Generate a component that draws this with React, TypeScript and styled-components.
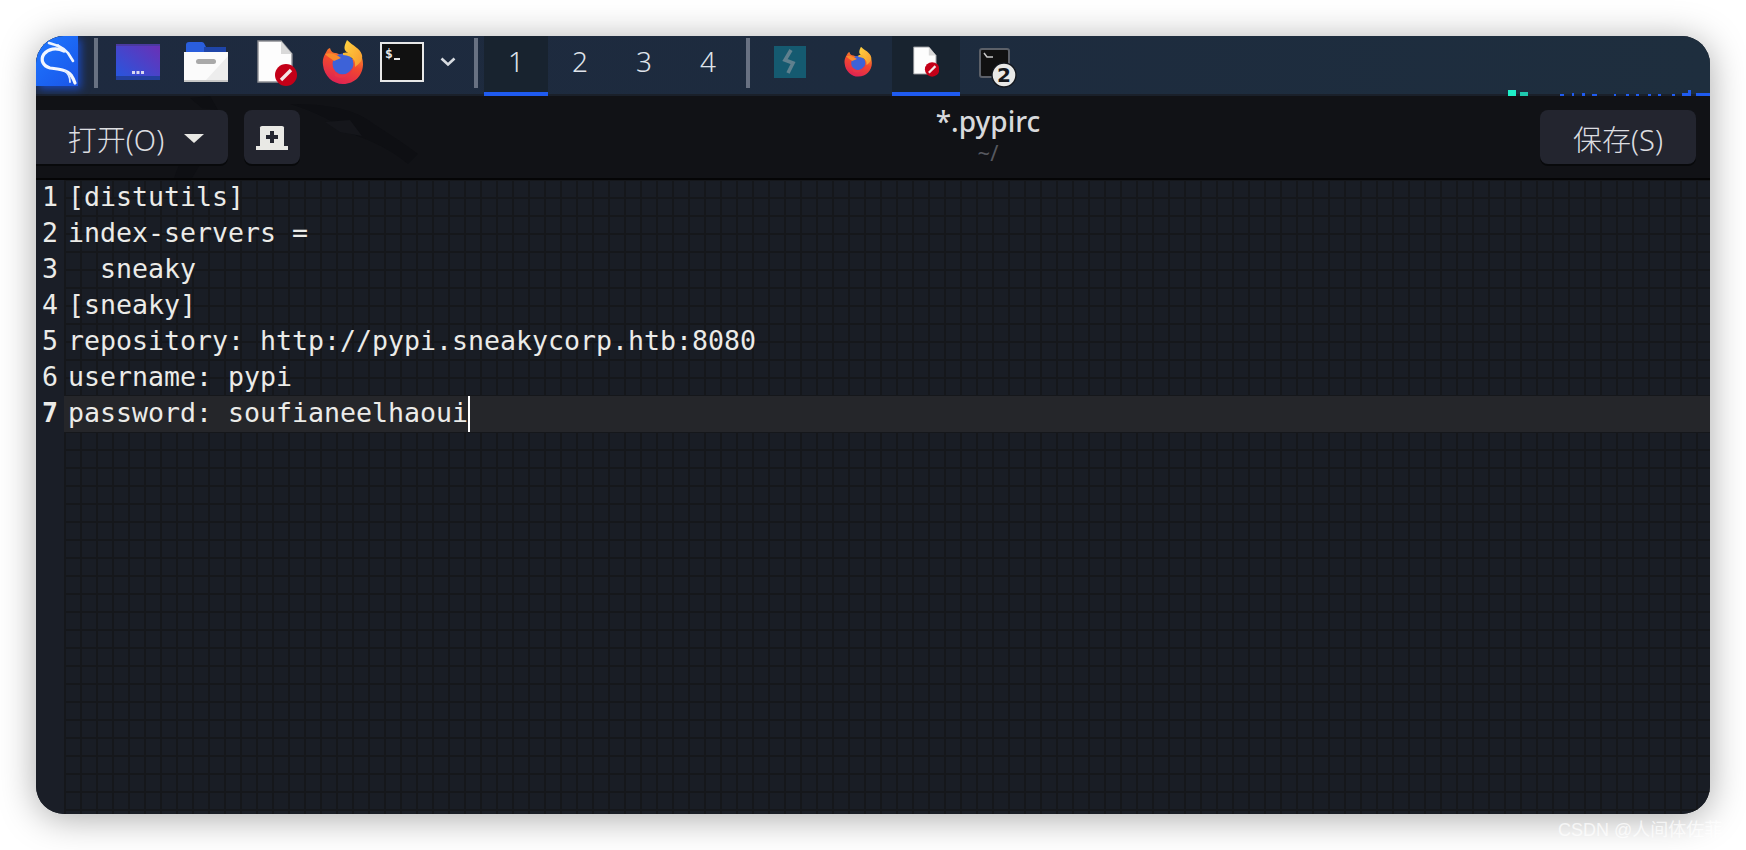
import React from "react";
import styled, { createGlobalStyle } from "styled-components";

const Global = createGlobalStyle`
  html, body { margin: 0; padding: 0; background: #fff; overflow: hidden; }
  * { box-sizing: border-box; }
`;

const SANS = `"Noto Sans", "Noto Sans CJK SC", sans-serif`;
const MONO = `"DejaVu Sans Mono", monospace`;

const Page = styled.div`
  position: relative;
  width: 1746px;
  height: 850px;
  padding: 36px;
`;

const Win = styled.div`
  position: relative;
  width: 1674px;
  height: 778px;
  border-radius: 28px;
  overflow: hidden;
  display: flex;
  flex-direction: column;
  box-shadow: 0 4px 36px rgba(0, 0, 0, 0.34);
  background: #191d25;
`;

const TopBar = styled.div`
  position: relative;
  height: 60px;
  flex: none;
  display: flex;
  align-items: stretch;
  background: linear-gradient(90deg, #1e2a3f 0%, #1d2b3e 50%, #1e2e3e 100%);
  border-bottom: 2px solid #1a202a;
`;

const KaliTile = styled.div`
  width: 42px;
  height: 50px;
  flex: none;
  background: linear-gradient(135deg, #1f78ff 0%, #1b63f2 60%, #1c55e6 100%);
  box-shadow: 3px 3px 8px #1b47b8;
`;

const Sep = styled.div<{ $ml: number }>`
  width: 4px;
  height: 50px;
  margin: 2px 0 0 ${(p) => p.$ml}px;
  flex: none;
  background: #687182;
`;

const Slot = styled.div<{ $w: number; $ml?: number }>`
  width: ${(p) => p.$w}px;
  margin-left: ${(p) => p.$ml ?? 0}px;
  flex: none;
  padding-bottom: 6px;
  display: flex;
  align-items: center;
  justify-content: center;
`;

const Tab = styled.div<{ $active?: boolean; $w?: number; $ml?: number }>`
  width: ${(p) => p.$w ?? 64}px;
  margin-left: ${(p) => p.$ml ?? 0}px;
  flex: none;
  height: 60px;
  padding-bottom: 6px;
  display: flex;
  align-items: center;
  justify-content: center;
  font-family: ${SANS};
  font-size: 28px;
  font-weight: 300;
  color: #dfe3ea;
  background: ${(p) => (p.$active ? "#18232f" : "transparent")};
  border-bottom: 4px solid ${(p) => (p.$active ? "#1f5bf0" : "transparent")};
`;

const Speck = styled.div<{ $l: number; $w: number; $h: number; $c: string }>`
  position: absolute;
  left: ${(p) => p.$l}px;
  bottom: -2px;
  width: ${(p) => p.$w}px;
  height: ${(p) => p.$h}px;
  background: ${(p) => p.$c};
`;

const Toolbar = styled.div`
  position: relative;
  height: 84px;
  flex: none;
  display: flex;
  align-items: flex-start;
  padding: 14px 14px 0 0;
  background: #111216;
  border-bottom: 2px solid #050506;
`;

const Dragon = styled.div`
  position: absolute;
  left: 64px;
  top: 0;
`;

const Btn = styled.div<{ $w: number; $ml?: number }>`
  position: relative;
  width: ${(p) => p.$w}px;
  height: 54px;
  margin-left: ${(p) => p.$ml ?? 0}px;
  padding-top: 2px;
  flex: none;
  display: flex;
  align-items: center;
  justify-content: center;
  gap: 20px;
  background: #23252f;
  border-radius: 8px;
  box-shadow: 0 2px 0 #08090b;
  font-family: ${SANS};
  font-size: 29px;
  font-weight: 300;
  color: #dcdde0;
`;

const OpenBtn = styled(Btn)`
  border-radius: 0 8px 8px 0;
  padding-left: 8px;
`;

const Arrow = styled.div`
  width: 0;
  height: 0;
  border-left: 10px solid transparent;
  border-right: 10px solid transparent;
  border-top: 9px solid #e8e8e4;
`;

const TitleBox = styled.div`
  position: relative;
  flex: 1;
  height: 60px;
  display: flex;
  flex-direction: column;
  align-items: center;
  font-family: ${SANS};
  margin-top: -9px;
  padding-left: 136px;
`;

const Title = styled.div`
  font-size: 28px;
  font-weight: 500;
  line-height: 40px;
  color: #d8d9dc;
`;

const Sub = styled.div`
  font-size: 22px;
  line-height: 22px;
  color: #56585f;
`;

const Editor = styled.div`
  flex: 1;
  display: flex;
  min-height: 0;
  font-family: ${MONO};
  font-size: 26.58px;
  line-height: 34px;
  color: #ebebe8;
`;

const Gutter = styled.div`
  width: 28px;
  flex: none;
  background: #1a1e27;
  padding-left: 6px;
`;

const Num = styled.div<{ $cur?: boolean }>`
  width: 16px;
  height: 36px;
  font-weight: ${(p) => (p.$cur ? 700 : 400)};
`;

const Code = styled.div`
  flex: 1;
  min-width: 0;
  background-color: #191d25;
  background-image:
    linear-gradient(90deg, #15171b 0, #15171b 2px, transparent 2px),
    linear-gradient(180deg, #15171b 0, #15171b 2px, transparent 2px);
  background-size: 16px 18px;
  background-position: 0 -1px;
`;

const Line = styled.div<{ $cur?: boolean }>`
  height: 36px;
  padding-left: 4px;
  white-space: pre;
  background: ${(p) => (p.$cur ? "#25262a" : "transparent")};
`;

const Caret = styled.span`
  display: inline-block;
  width: 2px;
  height: 36px;
  background: #fff;
  vertical-align: top;
`;

const Watermark = styled.div`
  position: absolute;
  left: 1558px;
  top: 819px;
  font-family: "Liberation Sans", "Noto Sans CJK SC", sans-serif;
  font-size: 18px;
  line-height: 22px;
  color: rgba(255, 255, 255, 0.72);
`;

const KaliLogo = () => (
  <svg width="42" height="50" viewBox="0 0 42 50" fill="none">
    <path
      d="M28 15 C20 11 12 13 8 18 C4 24 7 30 14 32 C23 33 31 34 35 39 C37 42 38 44 39 47"
      stroke="#f2f6ff"
      strokeWidth="3.2"
      strokeLinecap="round"
    />
    <path d="M13 7 C20 9 27 11 32 17 L37 25" stroke="#eef4ff" strokeWidth="2.6" strokeLinecap="round" />
    <path d="M29 35 C33 38 34 41 34 46" stroke="#dce8ff" strokeWidth="1.8" strokeLinecap="round" />
    <path d="M22 9 L25 14" stroke="#eef4ff" strokeWidth="1.8" strokeLinecap="round" />
  </svg>
);

const WorkspaceIcon = () => (
  <svg width="44" height="36" viewBox="0 0 44 36">
    <defs>
      <linearGradient id="ws" x1="0" y1="1" x2="1" y2="0">
        <stop offset="0" stopColor="#2458e0" />
        <stop offset="1" stopColor="#6c2fb4" />
      </linearGradient>
    </defs>
    <rect width="44" height="36" rx="1" fill="url(#ws)" />
    <rect width="44" height="2" fill="#4a3aa0" />
    <rect y="32" width="44" height="4" fill="#23409e" />
    <rect x="16" y="27" width="3" height="3" fill="#d8d8f0" />
    <rect x="20.5" y="27" width="3" height="3" fill="#d8d8f0" />
    <rect x="25" y="27" width="3" height="3" fill="#d8d8f0" />
  </svg>
);

const FolderIcon = () => (
  <svg width="44" height="40" viewBox="0 0 44 40">
    <path d="M2 3 Q2 0 5 0 H18 Q20 0 21 3 L22 5 H42 V10 H2 Z" fill="#2a5edc" />
    <rect x="20" y="5" width="22" height="5" fill="#1f45a8" />
    <rect y="10" width="44" height="30" fill="#fbfbfb" />
    <path d="M44 14 V38 H22 Z" fill="#ededed" />
    <rect y="38" width="44" height="2" fill="#c8c8c8" />
    <rect x="12" y="17" width="20" height="5" rx="2.5" fill="#a9a9a9" />
  </svg>
);

const DocIcon = ({ s = 1 }: { s?: number }) => (
  <svg width={40 * s} height={48 * s} viewBox="0 0 40 48">
    <path d="M1 3 H24 L35 16 V44 H1 Z" fill="#fdfdfd" stroke="#8d8f94" strokeWidth="1.4" />
    <path d="M24 3 L35 16 H24 Z" fill="#d9d9d9" />
    <path d="M20 44 L35 28 V44 Z" fill="#e8e8e8" />
    <circle cx="29" cy="37" r="11" fill="#c40018" />
    <path d="M24 42 L34 32" stroke="#f4e6e6" strokeWidth="3.4" />
  </svg>
);

const FirefoxIcon = ({ s = 1 }: { s?: number }) => (
  <svg width={42 * s} height={46 * s} viewBox="0 0 42 46">
    <defs>
      <linearGradient id="ffb" x1="0.7" y1="0" x2="0.3" y2="1">
        <stop offset="0" stopColor="#f9a32c" />
        <stop offset="0.45" stopColor="#f2492f" />
        <stop offset="1" stopColor="#dd1f55" />
      </linearGradient>
      <linearGradient id="fft" x1="0" y1="0" x2="1" y2="1">
        <stop offset="0" stopColor="#ffd440" />
        <stop offset="1" stopColor="#f8962e" />
      </linearGradient>
    </defs>
    <path
      d="M6 10 C3 15 0 19 1 26 C2 37 11 45 21 45 C33 45 41 36 41 25 C41 17 37 11 32 8 C34 14 33 18 30 20 L14 14 C11 14 9 13 8 9 Z"
      fill="url(#ffb)"
    />
    <path d="M25 1 C22 7 21 11 26 14 C31 17 34 22 33 28 C38 24 41 21 40 16 C38 9 31 7 25 1 Z" fill="url(#fft)" />
    <circle cx="21" cy="25" r="10.5" fill="#3d62d8" />
    <path d="M21 14 C26 12 32 15 33 22 C30 18 26 16 21 16 Z" fill="#f7b733" />
    <path d="M3 15 C8 13 14 15 19 19 L12 22 C8 19 6 18 3 15 Z" fill="#fb8a2c" />
    <path d="M12 33 C18 38 28 36 31 27 C30 36 21 42 13 37 Z" fill="#e93448" />
  </svg>
);

const TerminalIcon = () => (
  <svg width="44" height="40" viewBox="0 0 44 40">
    <rect x="1" y="1" width="42" height="38" fill="#111" stroke="#e8e8e8" strokeWidth="2" />
    <text x="5" y="16" fontFamily="'DejaVu Sans Mono', monospace" fontSize="13" fontWeight="700" fill="#e8e8e8">
      $
    </text>
    <rect x="14" y="16" width="6" height="2" fill="#e8e8e8" />
  </svg>
);

const Chevron = () => (
  <svg width="16" height="10" viewBox="0 0 16 10" fill="none">
    <path d="M1.5 1.5 L8 7.5 L14.5 1.5" stroke="#d7dbe0" strokeWidth="2.6" />
  </svg>
);

const BoltIcon = () => (
  <svg width="32" height="32" viewBox="0 0 32 32">
    <rect width="32" height="32" fill="#155a70" />
    <path d="M17 4 L11 14 L19 17 L14 27" fill="none" stroke="#5f808e" strokeWidth="3.6" />
  </svg>
);

const Terminal2Icon = () => (
  <svg width="68" height="52" viewBox="0 0 68 52">
    <rect x="20" y="13" width="29" height="28" rx="2" fill="#111" stroke="#5c6068" strokeWidth="2" />
    <path d="M24 17 L27 21 H33" fill="none" stroke="#c8c8c8" strokeWidth="1.5" />
    <circle cx="44" cy="39" r="12" fill="#e8e8e6" stroke="#14181f" strokeWidth="1.4" />
    <text
      x="44"
      y="46"
      textAnchor="middle"
      fontFamily="'DejaVu Sans', sans-serif"
      fontSize="20"
      fontWeight="700"
      fill="#16181c"
    >
      2
    </text>
  </svg>
);

const NewTabIcon = () => (
  <svg width="32" height="24" viewBox="0 0 32 24">
    <path d="M4 22 V1.5 Q4 0 6 0 H26 Q28 0 28 1.5 V22 Z" fill="#e9e9e5" />
    <rect y="20" width="32" height="4" fill="#e9e9e5" />
    <rect x="14" y="5" width="4" height="12" fill="#23252f" />
    <rect x="10" y="9" width="12" height="4" fill="#23252f" />
  </svg>
);

const DragonArt = () => (
  <svg width="340" height="82" viewBox="0 0 340 82" fill="none">
    <path
      d="M190 8 C225 8 250 12 268 24 C282 34 300 44 318 58 L308 68 C292 54 270 44 252 38 C240 30 222 18 190 8 Z"
      fill="#0e0f13"
    />
    <path d="M90 2 L110 0 L118 14 L102 12 Z" fill="#0e0f13" />
    <path d="M225 26 L250 24 L262 40 L240 36 Z" fill="#15161b" />
    <path d="M80 66 L104 62 L92 82 L74 82 Z" fill="#0e0f13" />
  </svg>
);

const BLUE = "#1f5bf0";
const specks: [number, number, number, string][] = [
  [1472, 8, 6, "#1ff0c8"],
  [1484, 8, 4, "#1fc8ae"],
  [1524, 4, 2, BLUE],
  [1536, 2, 3, BLUE],
  [1546, 3, 3, BLUE],
  [1556, 5, 2, BLUE],
  [1578, 2, 2, BLUE],
  [1590, 3, 2, BLUE],
  [1600, 3, 2, BLUE],
  [1612, 3, 2, BLUE],
  [1622, 3, 2, BLUE],
  [1636, 3, 2, BLUE],
  [1646, 6, 3, BLUE],
  [1652, 3, 6, BLUE],
  [1660, 14, 3, BLUE],
];

const lines = [
  "[distutils]",
  "index-servers =",
  "  sneaky",
  "[sneaky]",
  "repository: http://pypi.sneakycorp.htb:8080",
  "username: pypi",
];

export default function App() {
  return (
    <Page>
      <Global />
      <Win>
        <TopBar>
          <KaliTile>
            <KaliLogo />
          </KaliTile>
          <Sep $ml={16} />
          <Slot $w={80}>
            <WorkspaceIcon />
          </Slot>
          <Slot $w={56}>
            <FolderIcon />
          </Slot>
          <Slot $w={86}>
            <DocIcon />
          </Slot>
          <Slot $w={46}>
            <FirefoxIcon />
          </Slot>
          <Slot $w={64} $ml={4}>
            <TerminalIcon />
          </Slot>
          <Slot $w={28}>
            <Chevron />
          </Slot>
          <Sep $ml={12} />
          <Tab $active $ml={6}>1</Tab>
          <Tab>2</Tab>
          <Tab>3</Tab>
          <Tab>4</Tab>
          <Sep $ml={6} />
          <Slot $w={80}>
            <BoltIcon />
          </Slot>
          <Slot $w={56}>
            <FirefoxIcon s={0.68} />
          </Slot>
          <Tab $active $w={68} $ml={6}>
            <DocIcon s={0.66} />
          </Tab>
          <Slot $w={68}>
            <Terminal2Icon />
          </Slot>
          {specks.map(([l, w, h, c], i) => (
            <Speck key={i} $l={l} $w={w} $h={h} $c={c} />
          ))}
        </TopBar>
        <Toolbar>
          <Dragon>
            <DragonArt />
          </Dragon>
          <OpenBtn $w={192}>
            <span>打开(O)</span>
            <Arrow />
          </OpenBtn>
          <Btn $w={56} $ml={16}>
            <NewTabIcon />
          </Btn>
          <TitleBox>
            <Title>*.pypirc</Title>
            <Sub>~/</Sub>
          </TitleBox>
          <Btn $w={156}>保存(S)</Btn>
        </Toolbar>
        <Editor>
          <Gutter>
            {[1, 2, 3, 4, 5, 6, 7].map((n) => (
              <Num key={n} $cur={n === 7}>
                {n}
              </Num>
            ))}
          </Gutter>
          <Code>
            {lines.map((l) => (
              <Line key={l}>{l}</Line>
            ))}
            <Line $cur>
              password: soufianeelhaoui
              <Caret />
            </Line>
          </Code>
        </Editor>
      </Win>
      <Watermark>CSDN @人间体佐菲</Watermark>
    </Page>
  );
}
